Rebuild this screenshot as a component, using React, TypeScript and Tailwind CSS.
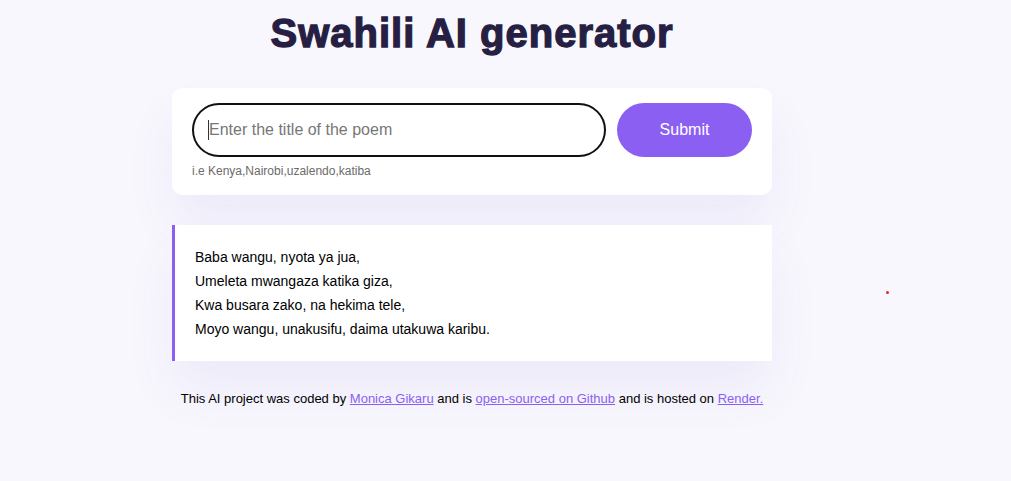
import React from "react";

export default function App() {
  return (
    <div
      className="relative min-h-[481px] w-full bg-[#f8f7fd] text-black"
      style={{ fontFamily: '"Liberation Sans", Arial, sans-serif' }}
    >
      <div className="ml-[172px] w-[600px] pt-[10px]">
        <h1 className="text-center text-[40px] font-black leading-[46px] tracking-[1px] text-[#261f43] [-webkit-text-stroke:1.3px_#261f43]">
          Swahili AI generator
        </h1>
        <div className="mt-[32px] rounded-[10px] bg-white px-[20px] pt-[15px] pb-[17px] shadow-[0_30px_50px_rgba(95,69,200,0.07)]">
          <div className="flex items-center gap-[11px]">
            <div className="flex h-[54px] w-[414px] items-center rounded-full border-2 border-[#111] px-[14px]">
              <span className="h-[20px] w-px bg-[#333]" />
              <span className="text-[16px] text-[#777]">Enter the title of the poem</span>
            </div>
            <button className="h-[54px] w-[135px] rounded-full bg-[#8c5ff3] text-[16px] text-white">
              Submit
            </button>
          </div>
          <div className="mt-[7px] text-[12px] leading-[14px] text-[#6b6b6b]">
            i.e Kenya,Nairobi,uzalendo,katiba
          </div>
        </div>
        <div className="mt-[30px] border-l-[3px] border-[#8c5ff3] bg-white pt-[20px] pb-[20px] pl-[20px] text-[14px] leading-[24px] shadow-[0_30px_50px_rgba(95,69,200,0.07)]">
          <div>Baba wangu, nyota ya jua,</div>
          <div>Umeleta mwangaza katika giza,</div>
          <div>Kwa busara zako, na hekima tele,</div>
          <div>Moyo wangu, unakusifu, daima utakuwa karibu.</div>
        </div>
        <p className="mt-[29px] text-center text-[13px] leading-[17px]">
          This AI project was coded by{" "}
          <a className="text-[#8c5ff3] underline">Monica Gikaru</a> and is{" "}
          <a className="text-[#8c5ff3] underline">open-sourced on Github</a> and is hosted on{" "}
          <a className="text-[#8c5ff3] underline">Render.</a>
        </p>
      </div>
      <div className="absolute left-[886px] top-[291px] h-[3px] w-[3px] rounded-full bg-[#e8232a]" />
    </div>
  );
}
